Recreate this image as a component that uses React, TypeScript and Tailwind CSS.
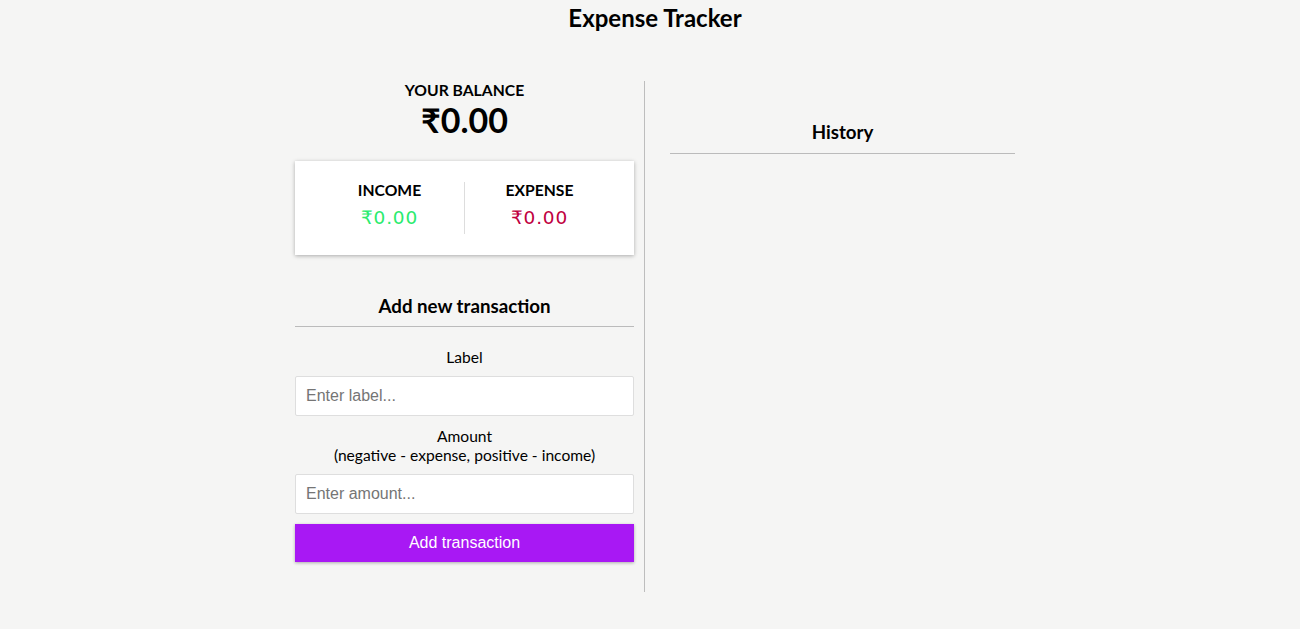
import React from "react";

export default function App() {
  return (
    <div className="min-h-[629px] bg-[#f5f5f4] text-black" style={{ fontFamily: "Lato, sans-serif" }}>
      <h1 className="text-center text-[24px] font-bold leading-[36px] pt-0 pl-[10px]">Expense Tracker</h1>
      <div className="flex justify-center pl-[10px] mt-[45px]">
        <div className="flex">
          <div className="w-[339px] flex flex-col pr-0">
            <div className="text-center">
              <h4 className="text-[15.7px] font-bold leading-[20px] -mt-[1px]">YOUR BALANCE</h4>
              <h2 className="text-[34px] font-bold leading-[38px] mt-[1px]">₹0.00</h2>
            </div>
            <div className="mt-[22px] bg-white shadow-[0_1px_4px_rgba(0,0,0,0.3)] flex items-start px-[20px] pt-[19px] h-[94px]">
              <div className="flex-1 text-center">
                <h4 className="text-[15.7px] font-bold leading-[20px]">INCOME</h4>
                <p className="mt-[4px] text-[18.5px] leading-[28px] text-[#2beb6e] tracking-[0.8px]" style={{ fontFamily: "'DejaVu Sans', sans-serif" }}>₹0.00</p>
              </div>
              <div className="w-px h-[52px] mt-[2px] bg-[#dddddd]" />
              <div className="flex-1 text-center">
                <h4 className="text-[15.7px] font-bold leading-[20px]">EXPENSE</h4>
                <p className="mt-[4px] text-[18.5px] leading-[28px] text-[#c0003f] tracking-[0.8px]" style={{ fontFamily: "'DejaVu Sans', sans-serif" }}>₹0.00</p>
              </div>
            </div>
            <h3 className="text-center text-[18.72px] font-bold leading-[28px] mt-[37px]">Add new transaction</h3>
            <div className="border-b border-[#bbbbbb] mt-[6px]" />
            <label className="block text-center text-[15.6px] leading-[20px] mt-[20px]">Label</label>
            <input
              className="mt-[9px] h-[40px] w-full bg-white border border-[#dedede] rounded-[2px] px-[10px] text-[16px] placeholder:text-[#757575] outline-none"
              style={{ fontFamily: "'Liberation Sans', Arial, sans-serif" }}
              placeholder="Enter label..."
            />
            <label className="block text-center text-[15.6px] leading-[19px] mt-[11px]">
              Amount
              <br />
              (negative - expense, positive - income)
            </label>
            <input
              className="mt-[9px] h-[40px] w-full bg-white border border-[#dedede] rounded-[2px] px-[10px] text-[16px] placeholder:text-[#757575] outline-none"
              style={{ fontFamily: "'Liberation Sans', Arial, sans-serif" }}
              placeholder="Enter amount..."
            />
            <button
              className="mt-[10px] h-[38px] w-full bg-[#a818f4] text-white text-[16px] shadow-[0_1px_3px_rgba(0,0,0,0.3)]"
              style={{ fontFamily: "'Liberation Sans', Arial, sans-serif" }}
            >
              Add transaction
            </button>
          </div>
          <div className="w-px bg-[#bdbdbd] ml-[10px] mr-[25px] h-[511px]" />
          <div className="w-[345px]">
            <h3 className="text-center text-[18.72px] font-bold leading-[28px] mt-[37px]">History</h3>
            <div className="border-b border-[#bbbbbb] mt-[7px]" />
          </div>
        </div>
      </div>
    </div>
  );
}
